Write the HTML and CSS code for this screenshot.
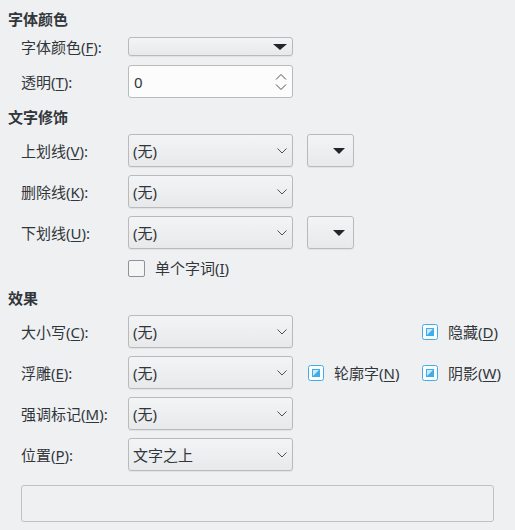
FILE: index.html
```html
<!DOCTYPE html>
<html lang="zh">
<head>
    <meta charset="UTF-8">
    <title>字体效果</title>
    <link rel="stylesheet" href="styles.css">
</head>
<body>
    <div class="page">
        <!-- 字体颜色 -->
        <h2 class="group">字体颜色</h2>
        <div class="row row-color">
            <label class="lbl">字体颜色(<u>F</u>):</label>
            <div class="colorbtn">
                <svg class="tri" width="14" height="6" viewBox="0 0 14 6"><path d="M0 0h14L7 6z" fill="#232629"/></svg>
            </div>
        </div>
        <div class="row row-spin">
            <label class="lbl">透明(<u>T</u>):</label>
            <div class="spin">
                <span class="text">0</span>
                <svg class="spinarrows" width="12" height="18" viewBox="0 0 12 18">
                    <path d="M1 6.5L6 1.5L11 6.5M1 11.5L6 16.5L11 11.5" fill="none" stroke="#4d5257" stroke-width="1"/>
                </svg>
            </div>
        </div>

        <!-- 文字修饰 -->
        <h2 class="group">文字修饰</h2>
        <div class="row row-first">
            <label class="lbl">上划线(<u>V</u>):</label>
            <div class="combo"><span class="text">(无)</span><svg class="chev" width="10" height="6" viewBox="0 0 10 6"><path d="M0.5 0.5L5 5L9.5 0.5" fill="none" stroke="#4d5257"/></svg></div>
            <div class="mini"><svg width="12" height="6" viewBox="0 0 12 6"><path d="M0 0h12L6 6z" fill="#232629"/></svg></div>
        </div>
        <div class="row">
            <label class="lbl">删除线(<u>K</u>):</label>
            <div class="combo"><span class="text">(无)</span><svg class="chev" width="10" height="6" viewBox="0 0 10 6"><path d="M0.5 0.5L5 5L9.5 0.5" fill="none" stroke="#4d5257"/></svg></div>
        </div>
        <div class="row">
            <label class="lbl">下划线(<u>U</u>):</label>
            <div class="combo"><span class="text">(无)</span><svg class="chev" width="10" height="6" viewBox="0 0 10 6"><path d="M0.5 0.5L5 5L9.5 0.5" fill="none" stroke="#4d5257"/></svg></div>
            <div class="mini"><svg width="12" height="6" viewBox="0 0 12 6"><path d="M0 0h12L6 6z" fill="#232629"/></svg></div>
        </div>
        <div class="row row-check">
            <span class="lbl"></span>
            <span class="check"></span>
            <span class="check-text">单个字词(<u>I</u>)</span>
        </div>

        <!-- 效果 -->
        <h2 class="group group-fx">效果</h2>
        <div class="row row-first">
            <label class="lbl">大小写(<u>C</u>):</label>
            <div class="combo"><span class="text">(无)</span><svg class="chev" width="10" height="6" viewBox="0 0 10 6"><path d="M0.5 0.5L5 5L9.5 0.5" fill="none" stroke="#4d5257"/></svg></div>
            <div class="opt"></div>
            <div class="opt">
                <svg class="tick" width="16" height="16" viewBox="0 0 16 16"><rect x="0.5" y="0.5" width="15" height="15" rx="2" fill="#fcfcfc" stroke="#3daee9"/><rect x="4.5" y="4.5" width="7" height="7" fill="#cfe9f8" stroke="#3daee9"/><path d="M12 4V12H4z" fill="#3daee9"/></svg>
                <span>隐藏(<u>D</u>)</span>
            </div>
        </div>
        <div class="row">
            <label class="lbl">浮雕(<u>E</u>):</label>
            <div class="combo"><span class="text">(无)</span><svg class="chev" width="10" height="6" viewBox="0 0 10 6"><path d="M0.5 0.5L5 5L9.5 0.5" fill="none" stroke="#4d5257"/></svg></div>
            <div class="opt">
                <svg class="tick" width="16" height="16" viewBox="0 0 16 16"><rect x="0.5" y="0.5" width="15" height="15" rx="2" fill="#fcfcfc" stroke="#3daee9"/><rect x="4.5" y="4.5" width="7" height="7" fill="#cfe9f8" stroke="#3daee9"/><path d="M12 4V12H4z" fill="#3daee9"/></svg>
                <span>轮廓字(<u>N</u>)</span>
            </div>
            <div class="opt">
                <svg class="tick" width="16" height="16" viewBox="0 0 16 16"><rect x="0.5" y="0.5" width="15" height="15" rx="2" fill="#fcfcfc" stroke="#3daee9"/><rect x="4.5" y="4.5" width="7" height="7" fill="#cfe9f8" stroke="#3daee9"/><path d="M12 4V12H4z" fill="#3daee9"/></svg>
                <span>阴影(<u>W</u>)</span>
            </div>
        </div>
        <div class="row">
            <label class="lbl">强调标记(<u>M</u>):</label>
            <div class="combo"><span class="text">(无)</span><svg class="chev" width="10" height="6" viewBox="0 0 10 6"><path d="M0.5 0.5L5 5L9.5 0.5" fill="none" stroke="#4d5257"/></svg></div>
        </div>
        <div class="row">
            <label class="lbl">位置(<u>P</u>):</label>
            <div class="combo"><span class="text">文字之上</span><svg class="chev" width="10" height="6" viewBox="0 0 10 6"><path d="M0.5 0.5L5 5L9.5 0.5" fill="none" stroke="#4d5257"/></svg></div>
        </div>

        <div class="preview"></div>
    </div>
</body>
</html>
```

FILE: styles.css
```css
body { margin: 0; background: #eff0f1; color: #31363b; font-family: "Noto Sans", "Noto Sans CJK SC", sans-serif; font-size: 15px; }
.page { padding-top: 9px; }
u { text-decoration-thickness: 1px; text-underline-offset: 2px; }

.group { margin: 0 0 0 8px; font-size: 15px; font-weight: bold; line-height: 20px; height: 20px; }
.group + .row { margin-top: 7px; }
.group-fx { margin-top: 11px; }

.row { display: flex; align-items: center; height: 33px; margin-top: 8px; padding-left: 21px; }
.lbl { width: 107px; flex: none; line-height: 20px; }

.row-color { height: 19px; margin-top: 8px; }
.group + .row-color { margin-top: 8px; }
.row-spin { margin-top: 9px; }
.row-spin + .group { margin-top: 9px; }
.row-check { height: 18px; margin-top: 10px; }

.colorbtn, .combo, .mini {
    box-sizing: border-box; height: 100%; border: 1px solid #b8babc; border-radius: 3px;
    background: linear-gradient(#f3f4f5, #e8e9ea); box-shadow: 0 1px 1px rgba(0,0,0,0.06);
    display: flex; align-items: center; flex: none;
}
.colorbtn { width: 165px; justify-content: flex-end; padding-right: 5px; }
.combo { width: 165px; padding-left: 4px; padding-right: 5px; }
.combo .text, .spin .text { flex: 1; line-height: 20px; }
.mini { width: 47px; margin-left: 14px; justify-content: flex-end; padding-right: 8px; }

.spin {
    box-sizing: border-box; width: 165px; height: 100%; border: 1px solid #b8babc; border-radius: 3px;
    background: #fcfcfc; display: flex; align-items: center; padding-left: 5px; padding-right: 5px; flex: none;
}

.check { box-sizing: border-box; width: 17px; height: 17px; border: 1px solid #8f9296; border-radius: 2px; background: #f4f5f5; flex: none; }
.check-text { margin-left: 10px; line-height: 20px; }

.opt { display: flex; align-items: center; width: 114px; margin-left: 15px; flex: none; }
.opt + .opt { margin-left: 0; width: auto; }
.tick { flex: none; margin-right: 10px; }
.opt span { line-height: 20px; white-space: nowrap; }

.preview { box-sizing: border-box; margin: 14px 21px 0 21px; height: 37px; width: 473px; border: 1px solid #bfc1c3; border-radius: 3px; background: #eff0f1; }
```
